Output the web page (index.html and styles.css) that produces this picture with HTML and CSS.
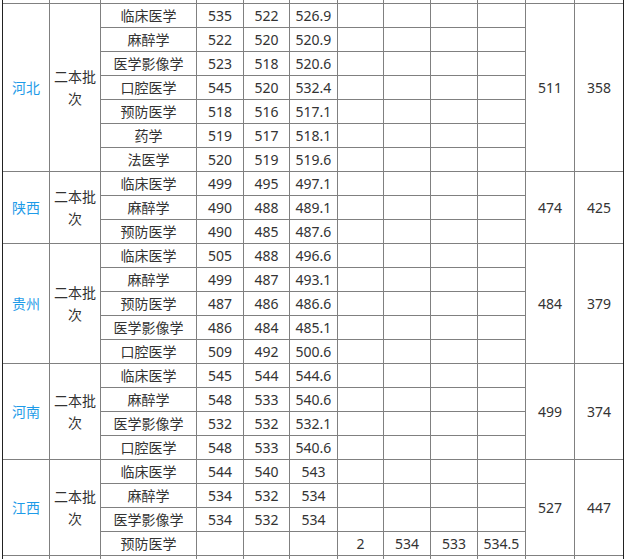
FILE: index.html
```html
<!DOCTYPE html>
<html lang="zh-CN">
<head>
<meta charset="utf-8">
<title>分数线</title>
<link rel="stylesheet" href="styles.css">
</head>
<body>
<div class="sheet">
  <!-- partial row above -->
  <div class="c top"></div><div class="c top"></div><div class="c top"></div><div class="c top"></div><div class="c top"></div><div class="c top"></div><div class="c top"></div><div class="c top"></div><div class="c top"></div><div class="c top"></div><div class="c top"></div><div class="c top end"></div>

  <!-- 河北 -->
  <div class="c prov span7">河北</div>
  <div class="c batch span7">二本批次</div>
  <div class="c">临床医学</div><div class="c">535</div><div class="c">522</div><div class="c">526.9</div><div class="c"></div><div class="c"></div><div class="c"></div><div class="c"></div>
  <div class="c span7">511</div>
  <div class="c end span7">358</div>
  <div class="c">麻醉学</div><div class="c">522</div><div class="c">520</div><div class="c">520.9</div><div class="c"></div><div class="c"></div><div class="c"></div><div class="c"></div>
  <div class="c">医学影像学</div><div class="c">523</div><div class="c">518</div><div class="c">520.6</div><div class="c"></div><div class="c"></div><div class="c"></div><div class="c"></div>
  <div class="c">口腔医学</div><div class="c">545</div><div class="c">520</div><div class="c">532.4</div><div class="c"></div><div class="c"></div><div class="c"></div><div class="c"></div>
  <div class="c">预防医学</div><div class="c">518</div><div class="c">516</div><div class="c">517.1</div><div class="c"></div><div class="c"></div><div class="c"></div><div class="c"></div>
  <div class="c">药学</div><div class="c">519</div><div class="c">517</div><div class="c">518.1</div><div class="c"></div><div class="c"></div><div class="c"></div><div class="c"></div>
  <div class="c">法医学</div><div class="c">520</div><div class="c">519</div><div class="c">519.6</div><div class="c"></div><div class="c"></div><div class="c"></div><div class="c"></div>

  <!-- 陕西 -->
  <div class="c prov span3">陕西</div>
  <div class="c batch span3">二本批次</div>
  <div class="c">临床医学</div><div class="c">499</div><div class="c">495</div><div class="c">497.1</div><div class="c"></div><div class="c"></div><div class="c"></div><div class="c"></div>
  <div class="c span3">474</div>
  <div class="c end span3">425</div>
  <div class="c">麻醉学</div><div class="c">490</div><div class="c">488</div><div class="c">489.1</div><div class="c"></div><div class="c"></div><div class="c"></div><div class="c"></div>
  <div class="c">预防医学</div><div class="c">490</div><div class="c">485</div><div class="c">487.6</div><div class="c"></div><div class="c"></div><div class="c"></div><div class="c"></div>

  <!-- 贵州 -->
  <div class="c prov span5">贵州</div>
  <div class="c batch span5">二本批次</div>
  <div class="c">临床医学</div><div class="c">505</div><div class="c">488</div><div class="c">496.6</div><div class="c"></div><div class="c"></div><div class="c"></div><div class="c"></div>
  <div class="c span5">484</div>
  <div class="c end span5">379</div>
  <div class="c">麻醉学</div><div class="c">499</div><div class="c">487</div><div class="c">493.1</div><div class="c"></div><div class="c"></div><div class="c"></div><div class="c"></div>
  <div class="c">预防医学</div><div class="c">487</div><div class="c">486</div><div class="c">486.6</div><div class="c"></div><div class="c"></div><div class="c"></div><div class="c"></div>
  <div class="c">医学影像学</div><div class="c">486</div><div class="c">484</div><div class="c">485.1</div><div class="c"></div><div class="c"></div><div class="c"></div><div class="c"></div>
  <div class="c">口腔医学</div><div class="c">509</div><div class="c">492</div><div class="c">500.6</div><div class="c"></div><div class="c"></div><div class="c"></div><div class="c"></div>

  <!-- 河南 -->
  <div class="c prov span4">河南</div>
  <div class="c batch span4">二本批次</div>
  <div class="c">临床医学</div><div class="c">545</div><div class="c">544</div><div class="c">544.6</div><div class="c"></div><div class="c"></div><div class="c"></div><div class="c"></div>
  <div class="c span4">499</div>
  <div class="c end span4">374</div>
  <div class="c">麻醉学</div><div class="c">548</div><div class="c">533</div><div class="c">540.6</div><div class="c"></div><div class="c"></div><div class="c"></div><div class="c"></div>
  <div class="c">医学影像学</div><div class="c">532</div><div class="c">532</div><div class="c">532.1</div><div class="c"></div><div class="c"></div><div class="c"></div><div class="c"></div>
  <div class="c">口腔医学</div><div class="c">548</div><div class="c">533</div><div class="c">540.6</div><div class="c"></div><div class="c"></div><div class="c"></div><div class="c"></div>

  <!-- 江西 -->
  <div class="c prov span4">江西</div>
  <div class="c batch span4">二本批次</div>
  <div class="c">临床医学</div><div class="c">544</div><div class="c">540</div><div class="c">543</div><div class="c"></div><div class="c"></div><div class="c"></div><div class="c"></div>
  <div class="c span4">527</div>
  <div class="c end span4">447</div>
  <div class="c">麻醉学</div><div class="c">534</div><div class="c">532</div><div class="c">534</div><div class="c"></div><div class="c"></div><div class="c"></div><div class="c"></div>
  <div class="c">医学影像学</div><div class="c">534</div><div class="c">532</div><div class="c">534</div><div class="c"></div><div class="c"></div><div class="c"></div><div class="c"></div>
  <div class="c">预防医学</div><div class="c"></div><div class="c"></div><div class="c"></div><div class="c">2</div><div class="c">534</div><div class="c">533</div><div class="c">534.5</div>

  <!-- partial row below -->
  <div class="c bottom"></div><div class="c bottom"></div><div class="c bottom"></div><div class="c bottom"></div><div class="c bottom"></div><div class="c bottom"></div><div class="c bottom"></div><div class="c bottom"></div><div class="c bottom"></div><div class="c bottom"></div><div class="c bottom"></div><div class="c bottom end"></div>
</div>
</body>
</html>
```

FILE: styles.css
```css
html, body {
  margin: 0;
  padding: 0;
  background: #ffffff;
  overflow: hidden;
}

body {
  font-family: "Noto Sans", "Noto Sans CJK SC", sans-serif;
  font-size: 14px;
  color: #333333;
}

.sheet {
  margin-left: 2px;
  width: 620px;
  border-left: 1px solid #222222;
  border-right: 1px solid #222222;
  display: grid;
  grid-template-columns: 47px 51px 96px 47px 46px 48px 46px 47px 47px 48px 49px 48px;
  grid-template-rows: 4px repeat(23, 24px) 3px;
}

.c {
  box-sizing: border-box;
  border-right: 1px solid #808080;
  border-bottom: 1px solid #808080;
  display: flex;
  align-items: center;
  justify-content: center;
  text-align: center;
  line-height: 22px;
  overflow: hidden;
}

.end {
  border-right: none;
}

.bottom {
  border-bottom: none;
}

.prov {
  color: #1e9be8;
}

.batch {
  padding: 0;
}

.span3 { grid-row: span 3; }
.span4 { grid-row: span 4; }
.span5 { grid-row: span 5; }
.span7 { grid-row: span 7; }
```
